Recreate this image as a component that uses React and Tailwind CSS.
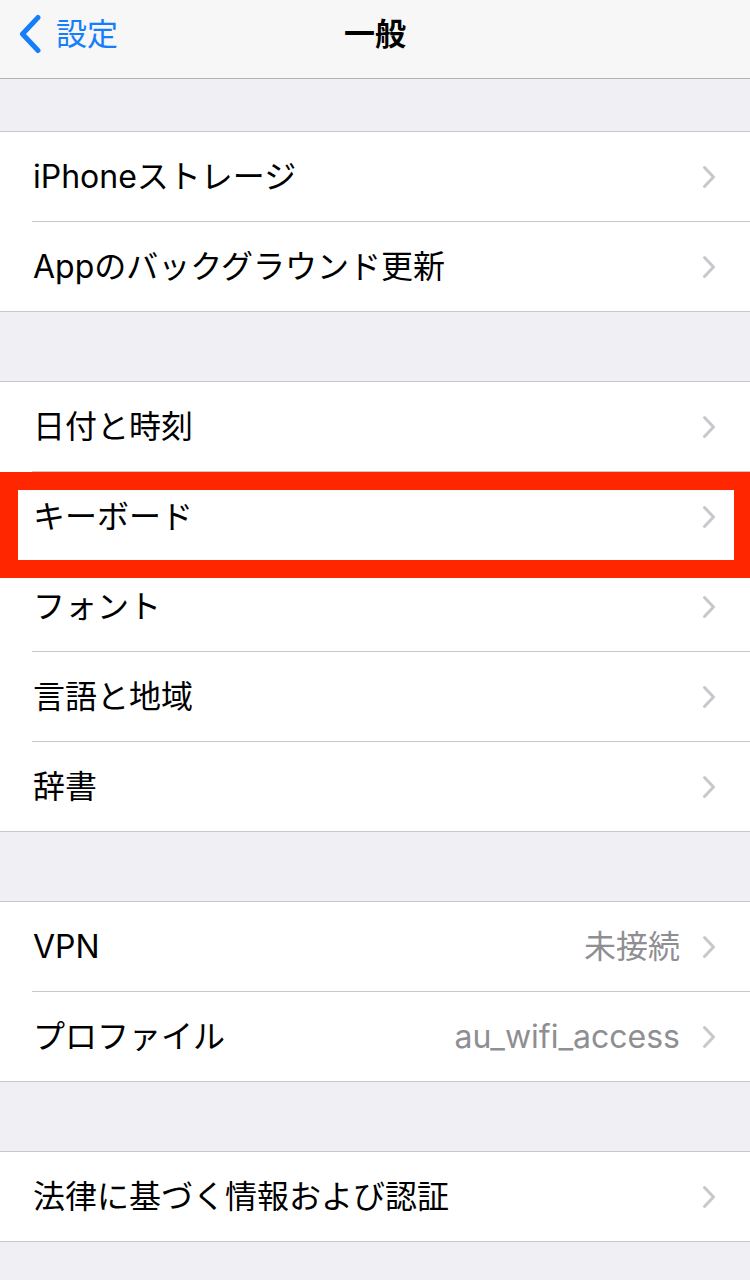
import React from 'react';

const groups = [
  [
    { label: 'iPhoneストレージ' },
    { label: 'Appのバックグラウンド更新' },
  ],
  [
    { label: '日付と時刻' },
    { label: 'キーボード', highlight: true },
    { label: 'フォント' },
    { label: '言語と地域' },
    { label: '辞書' },
  ],
  [
    { label: 'VPN', value: '未接続' },
    { label: 'プロファイル', value: 'au_wifi_access' },
  ],
  [{ label: '法律に基づく情報および認証' }],
];

function Chevron() {
  return (
    <svg width="14" height="24" viewBox="0 0 14 24" className="shrink-0">
      <path d="M2.5 2.5 L11.5 12 L2.5 21.5" fill="none" stroke="#c7c7cc" strokeWidth="3" strokeLinecap="round" strokeLinejoin="round" />
    </svg>
  );
}

function Row({ item, last }) {
  return (
    <div className="relative bg-white">
      <div className="flex h-[89px] items-center pl-[33px] pr-[34px]">
        <span className="flex-1 text-[32px] text-black">{item.label}</span>
        {item.value && <span className="mr-[22px] text-[32px] text-[#8e8e93]">{item.value}</span>}
        <Chevron />
      </div>
      {!last && <div className="ml-[32px] h-px bg-[#c8c7cc]" />}
      {/* red highlight frame drawn over the row */}
      {item.highlight && (
        <div className="absolute left-0 right-0 top-0 z-10 h-[106px] border-y-[18px] border-l-[18px] border-r-[16px] border-[#ff2600]" />
      )}
    </div>
  );
}

export default function App() {
  return (
    <div className="min-h-[1280px] bg-[#efeff4] font-['Inter','Noto_Sans_CJK_JP',sans-serif]">
      {/* Nav bar */}
      <div className="h-[79px] border-b border-[#b2b2b2] bg-[#f7f7f7]">
        <div className="relative flex h-[68px] items-center">
          <div className="flex items-center pl-[18px]">
            <svg width="24" height="40" viewBox="0 0 24 40">
              <path d="M20 3.5 L4.5 20 L20 36.5" fill="none" stroke="#157efb" strokeWidth="5" strokeLinecap="round" strokeLinejoin="round" />
            </svg>
            <span className="ml-[14px] text-[31px] text-[#157efb]">設定</span>
          </div>
          <span className="absolute left-1/2 -translate-x-1/2 text-[31px] font-bold text-black">一般</span>
        </div>
      </div>

      <div className="pt-[52px]">
        {groups.map((g, i) => (
          <div key={i} className={`border-y border-[#c8c7cc] ${i > 0 ? 'mt-[69px]' : ''}`}>
            {g.map((item, j) => (
              <Row key={item.label} item={item} last={j === g.length - 1} />
            ))}
          </div>
        ))}
      </div>
    </div>
  );
}
